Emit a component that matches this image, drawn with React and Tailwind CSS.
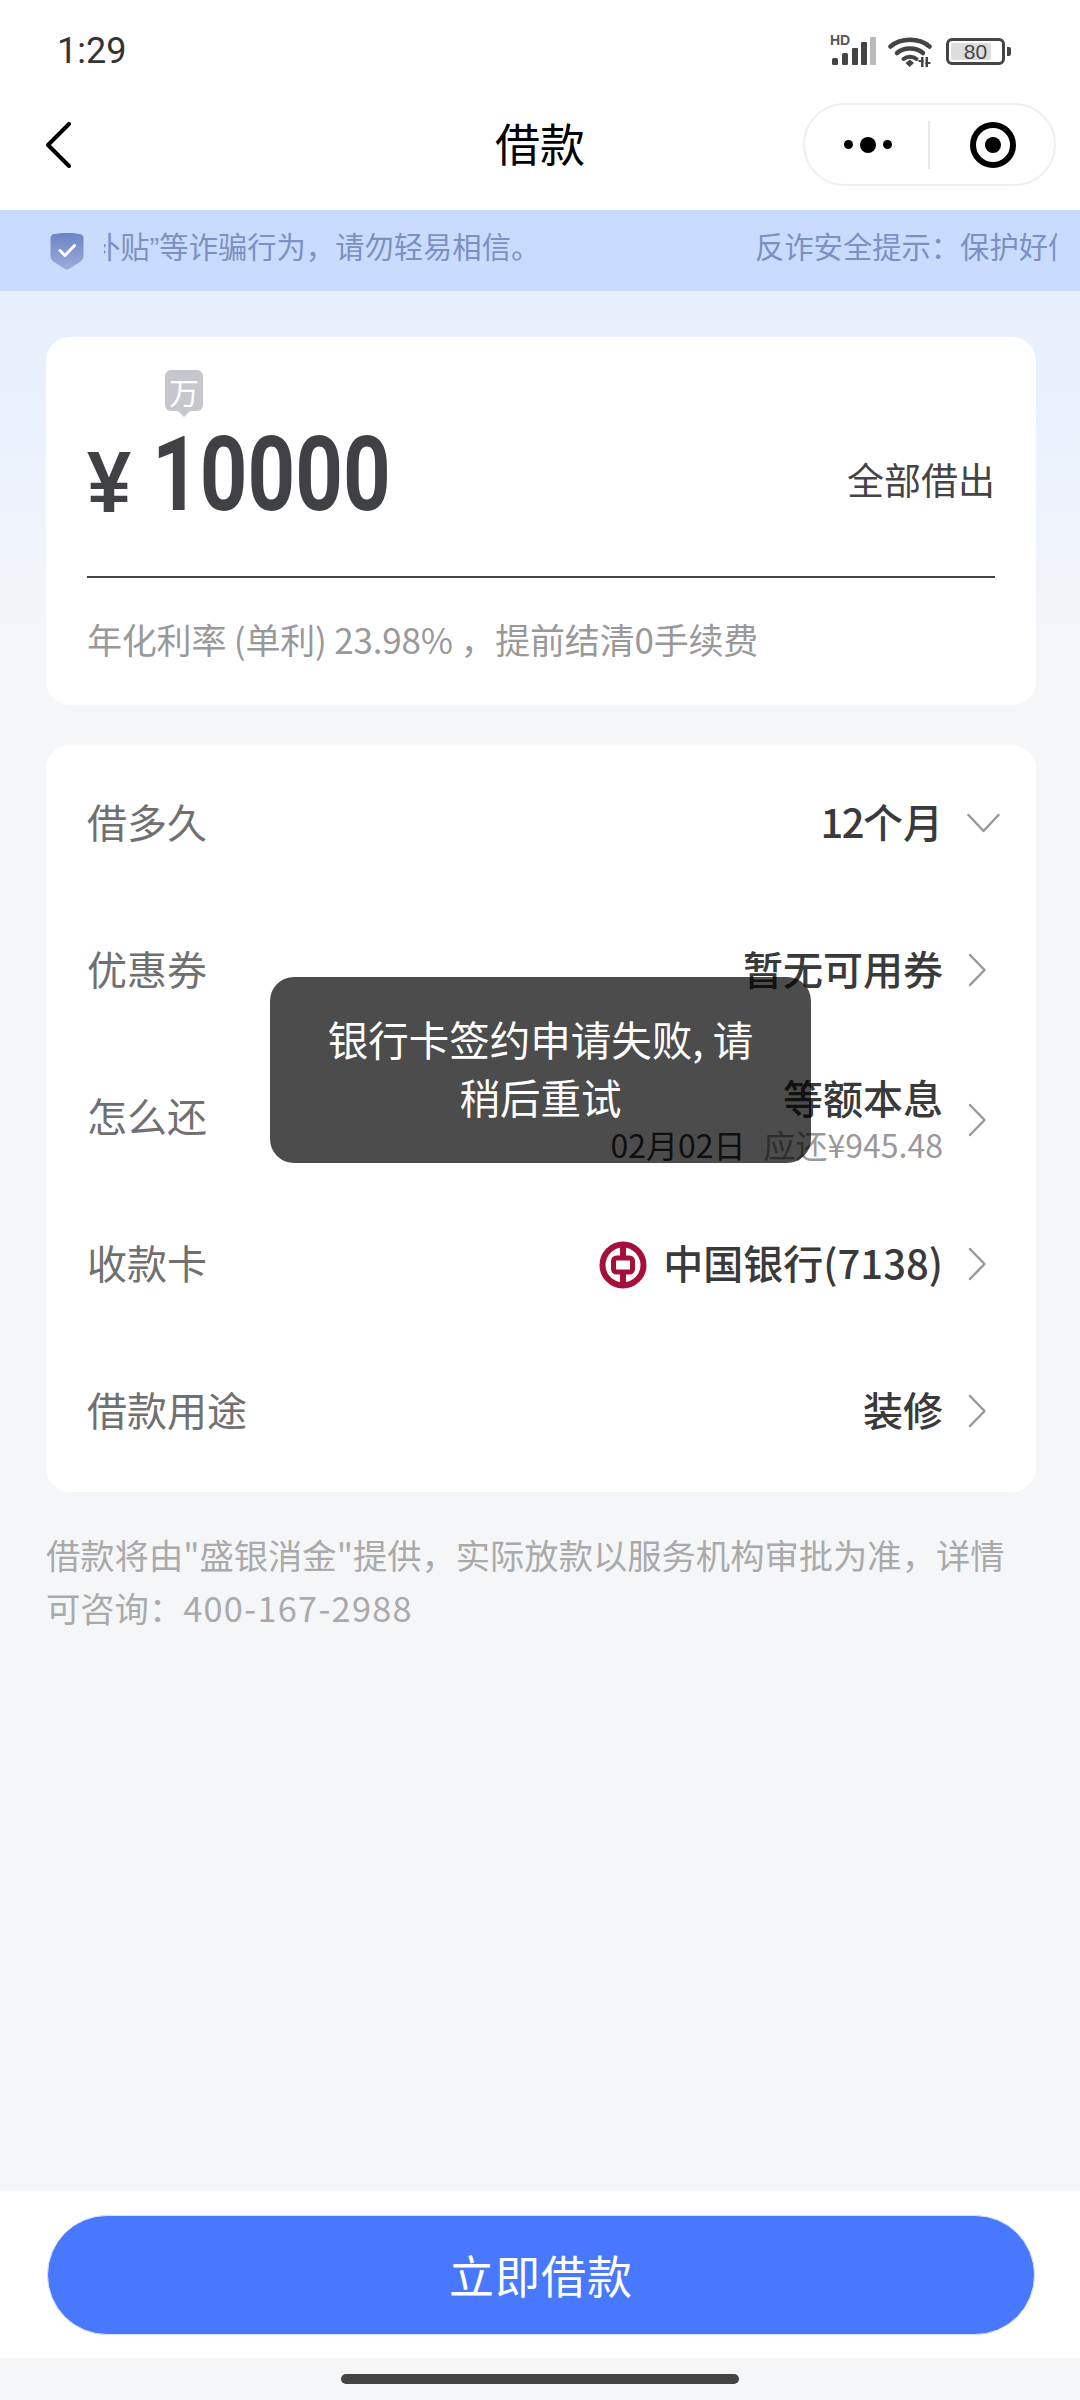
const CJK = "font-['Noto_Sans_CJK_SC','Noto_Sans',sans-serif]";

function StatusIcons() {
  return (
    <div className="flex items-center mt-[3px]">
      <div className="relative w-[48px] h-[32px] mr-[10px]">
        <span className="absolute left-0 top-[-2px] text-[14px] leading-[14px] font-bold text-[#555] font-['Liberation_Sans',sans-serif]">HD</span>
        <svg width="48" height="32" viewBox="0 0 48 32" className="absolute left-0 top-0">
          <rect x="2" y="23" width="6" height="7" rx="1.5" fill="#444" />
          <rect x="12" y="18" width="6" height="12" rx="1.5" fill="#444" />
          <rect x="22" y="13" width="6" height="17" rx="1" fill="#444" />
          <rect x="31" y="7" width="6" height="23" rx="1" fill="#444" />
          <rect x="40" y="2" width="6" height="28" rx="1" fill="#b9b9b9" />
        </svg>
      </div>
      <svg width="44" height="34" viewBox="0 0 44 34" className="mr-[14px]">
        <path d="M2.5 12.5 C13 3.5 31 3.5 41.5 12.5" fill="none" stroke="#444" strokeWidth="4.5" strokeLinecap="round" />
        <path d="M9 19 C16 13 28 13 35 19" fill="none" stroke="#444" strokeWidth="4.5" strokeLinecap="round" />
        <path d="M15.5 25 C19 22 25 22 28.5 25" fill="none" stroke="#444" strokeWidth="4" strokeLinecap="round" />
        <path d="M17.5 29 L22 25.5 L26 29 L21.5 33 Z" fill="#444" />
        <rect x="33" y="23" width="2.5" height="10" fill="#444" />
        <rect x="37.5" y="23" width="2.5" height="10" fill="#444" />
        <rect x="30.5" y="26" width="5" height="2" fill="#444" />
        <rect x="37.5" y="28" width="5" height="2" fill="#444" />
      </svg>
      <div className="relative w-[59px] h-[27px] rounded-[6px] border-[3px] border-[#444] overflow-hidden flex items-center justify-center">
        <div className="absolute left-[2px] top-[2px] bottom-[2px] w-[40px] bg-[#ddd] rounded-[2px]" />
        <span className="relative text-[21px] leading-none text-[#444] font-['Liberation_Sans',sans-serif]">80</span>
      </div>
      <div className="w-[4px] h-[9px] ml-[2px] rounded-r-[2px] bg-[#444]" />
    </div>
  );
}

function Shield() {
  return (
    <svg width="34" height="38" viewBox="0 0 34 38">
      <defs>
        <linearGradient id="shield" x1="0" y1="0" x2="0" y2="1">
          <stop offset="0" stopColor="#6b84c5" />
          <stop offset="1" stopColor="#9dacdb" />
        </linearGradient>
      </defs>
      <path d="M4 2 C10 0.5 24 0.5 30 2 C32 2.5 33.5 4 33.5 6 L33.5 24 C33.5 27 32 28.5 30 30 L19 37 C17.5 38 16.5 38 15 37 L4 30 C2 28.5 0.5 27 0.5 24 L0.5 6 C0.5 4 2 2.5 4 2 Z" fill="url(#shield)" />
      <path d="M10 18.5 L15 23.5 L24.5 13.5" fill="none" stroke="#fff" strokeWidth="3" strokeLinecap="round" strokeLinejoin="round" />
    </svg>
  );
}

function ChevronRight({ tall }) {
  return (
    <svg width="33" height="34" viewBox="0 0 33 34" fill="none" className={tall ? "mt-[3px]" : "mb-[3px]"}>
      <path d="M3 2 L17.5 17 L3 32" stroke="#999" strokeWidth="2.5" strokeLinecap="round" strokeLinejoin="round" />
    </svg>
  );
}

function ChevronDown() {
  return (
    <svg width="33" height="20" viewBox="0 0 33 20" fill="none" className="mb-[3px]">
      <path d="M1.5 2 L16.5 18 L31.5 2" stroke="#999" strokeWidth="2.5" strokeLinecap="round" strokeLinejoin="round" />
    </svg>
  );
}

function BocLogo() {
  return (
    <svg width="48" height="48" viewBox="0 0 48 48" fill="none" className="mt-[6px]">
      <circle cx="24" cy="24" r="20.5" stroke="#a50f38" strokeWidth="6" />
      <rect x="14.5" y="17" width="19" height="14" rx="3" stroke="#a50f38" strokeWidth="5" />
      <rect x="21" y="3" width="6" height="12" fill="#a50f38" />
      <rect x="21" y="33" width="6" height="12" fill="#a50f38" />
    </svg>
  );
}

function Row({ label, children, down, tall }) {
  return (
    <div className="flex items-center justify-between h-[147px] pl-[41px] pr-[36px]">
      <span className="pb-[8px] text-[40px] leading-[50px] text-[#707070]">{label}</span>
      <div className="flex items-center gap-[24px]">
        <div className={tall ? "flex flex-col items-end" : "flex flex-col items-end pb-[8px]"}>{children}</div>
        {down ? <ChevronDown /> : <ChevronRight tall={tall} />}
      </div>
    </div>
  );
}

function Value({ children }) {
  return <span className="text-[40px] leading-[50px] font-medium text-[#3a3a3a]">{children}</span>;
}

export default function App() {
  return (
    <div className={"w-[1080px] h-[2400px] relative flex flex-col overflow-hidden bg-[#f5f6f8] " + CJK}>
      {/* Status bar */}
      <div className="h-[103px] bg-white flex items-start justify-between pt-[31px] pl-[57px] pr-[69px]">
        <span className="text-[36px] leading-[40px] text-[#333] font-['Roboto',sans-serif]">1:29</span>
        <StatusIcons />
      </div>

      {/* Nav */}
      <div className="h-[107px] bg-white relative flex items-start justify-between pl-[45px] pr-[24px]">
        <svg width="26" height="46" viewBox="0 0 26 46" fill="none" className="mt-[19px]">
          <path d="M24 2 L3 23 L24 44" stroke="#000" strokeWidth="4" strokeLinecap="round" strokeLinejoin="round" />
        </svg>
        <h1 className="absolute left-0 right-0 top-[10px] text-center text-[45px] leading-[60px] font-normal text-black">借款</h1>
        <div className="w-[253px] h-[83px] rounded-full border-2 border-[#efefef] flex items-center">
          <div className="w-[123px] flex items-center justify-center gap-[7px] pl-[2px]">
            <div className="w-[9px] h-[9px] rounded-full bg-black" />
            <div className="w-[16px] h-[16px] rounded-full bg-black" />
            <div className="w-[9px] h-[9px] rounded-full bg-black" />
          </div>
          <div className="w-[2px] h-[48px] bg-[#e8e8e8]" />
          <div className="flex-1 flex items-center justify-center pl-[2px]">
            <div className="w-[46px] h-[46px] rounded-full border-[6px] border-black flex items-center justify-center">
              <div className="w-[16px] h-[16px] rounded-full bg-black" />
            </div>
          </div>
        </div>
      </div>

      {/* Notice bar */}
      <div className="h-[81px] bg-[#c9dcfd] flex items-center pl-[50px] pr-[23px] gap-[20px]">
        <Shield />
        <div className="flex-1 overflow-hidden pb-[8px]">
          <div className="w-[1200px] -ml-[13px] flex text-[29.3px] leading-[40px] text-[#7c90c3] whitespace-nowrap">
            <span className="w-[664px]">补贴<span className="font-['Liberation_Sans',sans-serif]">”</span>等诈骗行为，请勿轻易相信。</span>
            <span>反诈安全提示：保护好信息</span>
          </div>
        </div>
      </div>

      {/* Content */}
      <div className="flex-1 pl-[46px] pr-[44px] pt-[46px] bg-gradient-to-b from-[#e6effe] to-[#f5f6f8] to-[21%]">
        <div className="h-[368px] bg-white rounded-[24px] px-[41px] pt-[33px]">
          <div className="relative w-[38px] h-[47px] ml-[78px]">
            <div className="w-[38px] h-[41px] rounded-[6px] bg-[#c5c7cd] flex items-center justify-center text-[30px] leading-none text-white">万</div>
            <div className="absolute left-[13px] top-[41px] w-0 h-0 border-x-[6px] border-x-transparent border-t-[6px] border-t-[#c5c7cd]" />
          </div>
          <div className="h-[161px] border-b-2 border-[#444] flex items-start justify-between">
            <div className="flex items-start text-[#404145]">
              <span className="w-[65px] mt-[7px] origin-left scale-x-[0.9] text-[88px] leading-[116px] font-bold font-['Liberation_Sans',sans-serif]">¥</span>
              <span className="origin-left scale-x-[0.8] text-[104px] leading-[116px] font-bold font-['Roboto',sans-serif]">10000</span>
            </div>
            <span className="mt-[37px] text-[37px] leading-[50px] text-[#444]">全部借出</span>
          </div>
          <div className="mt-[36px] text-[35px] tracking-[-0.2px] leading-[50px] text-[#999]">年化利率 (单利) 23.98% ，提前结清0手续费</div>
        </div>

        <div className="mt-[40px] h-[747px] py-[6px] bg-white rounded-[24px]">
          <Row label="借多久" down><Value><span className="tracking-[-1.5px]">12</span>个月</Value></Row>
          <Row label="优惠券"><Value>暂无可用券</Value></Row>
          <Row label="怎么还" tall>
            <Value>等额本息</Value>
            <span className="mt-[1px] text-[32px] leading-[42px] text-[#333]">
              02月02日<span className="ml-[18px] text-[#999]">应还¥945.48</span>
            </span>
          </Row>
          <Row label="收款卡">
            <div className="flex items-center gap-[16px]">
              <BocLogo />
              <Value>中国银行(7138)</Value>
            </div>
          </Row>
          <Row label="借款用途"><Value>装修</Value></Row>
        </div>

        <p className="mt-[36px] pr-[30px] text-[34.3px] leading-[53px] text-[#aaa]">
          借款将由"盛银消金"提供，实际放款以服务机构审批为准，详情可咨询：<span className="tracking-[1.3px]">400-167-2988</span>
        </p>
      </div>

      {/* Bottom action */}
      <div className="h-[167px] bg-white pl-[47px] pt-[24px]">
        <button className="w-[988px] h-[120px] rounded-full bg-[#4778fd] border border-[#d6e4fb] text-[45px] text-white tracking-[1px]">立即借款</button>
      </div>
      <div className="h-[42px] flex justify-center pt-[16px]">
        <div className="w-[398px] h-[10px] rounded-full bg-[#444]" />
      </div>

      {/* Toast */}
      <div className="absolute left-[270px] top-[977px] w-[541px] h-[186px] rounded-[24px] bg-black/70 px-[56px] pt-[33px] text-center text-[40.5px] leading-[58px] text-white">
        银行卡签约申请失败, 请稍后重试
      </div>
    </div>
  );
}
